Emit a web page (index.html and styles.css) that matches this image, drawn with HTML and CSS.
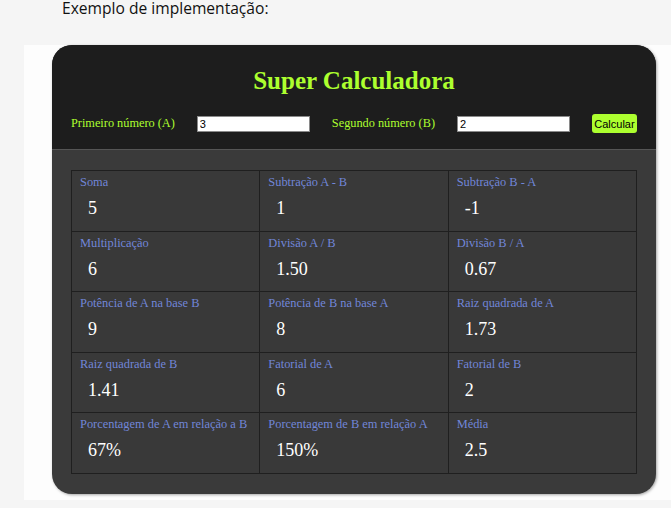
FILE: index.html
```html
<!DOCTYPE html>
<html lang="pt-BR">
<head>
<meta charset="utf-8">
<title>Super Calculadora</title>
<link rel="stylesheet" href="styles.css">
</head>
<body>
<p class="intro">Exemplo de implementação:</p>
<div class="panel">
  <div class="calc">
    <div class="calc-head">
      <h1 class="title">Super Calculadora</h1>
      <div class="controls">
        <label class="lbl" for="a">Primeiro número (A)</label>
        <input class="num" id="a" type="text" value="3">
        <label class="lbl" for="b">Segundo número (B)</label>
        <input class="num" id="b" type="text" value="2">
        <button class="btn">Calcular</button>
      </div>
    </div>
    <div class="calc-body">
      <div class="grid">
        <div class="cell"><div class="name">Soma</div><div class="val">5</div></div>
        <div class="cell"><div class="name">Subtração A - B</div><div class="val">1</div></div>
        <div class="cell"><div class="name">Subtração B - A</div><div class="val">-1</div></div>
        <div class="cell"><div class="name">Multiplicação</div><div class="val">6</div></div>
        <div class="cell"><div class="name">Divisão A / B</div><div class="val">1.50</div></div>
        <div class="cell"><div class="name">Divisão B / A</div><div class="val">0.67</div></div>
        <div class="cell"><div class="name">Potência de A na base B</div><div class="val">9</div></div>
        <div class="cell"><div class="name">Potência de B na base A</div><div class="val">8</div></div>
        <div class="cell"><div class="name">Raiz quadrada de A</div><div class="val">1.73</div></div>
        <div class="cell"><div class="name">Raiz quadrada de B</div><div class="val">1.41</div></div>
        <div class="cell"><div class="name">Fatorial de A</div><div class="val">6</div></div>
        <div class="cell"><div class="name">Fatorial de B</div><div class="val">2</div></div>
        <div class="cell"><div class="name">Porcentagem de A em relação a B</div><div class="val">67%</div></div>
        <div class="cell"><div class="name">Porcentagem de B em relação A</div><div class="val">150%</div></div>
        <div class="cell"><div class="name">Média</div><div class="val">2.5</div></div>
      </div>
    </div>
  </div>
</div>
</body>
</html>
```
FILE: styles.css
```css
html, body {
  margin: 0;
  padding: 0;
  background: #f5f5f5;
}
body {
  width: 671px;
  height: 508px;
  overflow: hidden;
}
.intro {
  margin: 0 0 0 62px;
  height: 45px;
  font-family: "Open Sans", "Noto Sans", sans-serif;
  font-size: 15.6px;
  line-height: 16px;
  color: #111;
}
.panel {
  margin-left: 24px;
  width: 614px;
  padding: 0 14px 6px 28px;
  background: #fdfdfd;
}
.calc {
  width: 604px;
  border-radius: 20px;
  overflow: hidden;
  background: #3a3a3a;
  box-shadow: 1px 1px 3px rgba(0, 0, 0, 0.35);
  font-family: "Liberation Serif", "Times New Roman", serif;
}
.calc-head {
  background: #1d1d1d;
  padding: 21px 19px 16px;
  border-bottom: 1px solid #555;
}
.title {
  margin: 0;
  text-align: center;
  font-size: 25px;
  line-height: 29px;
  font-weight: bold;
  color: #adff2f;
}
.controls {
  margin-top: 19px;
  display: flex;
  align-items: center;
  justify-content: space-between;
  height: 19px;
}
.lbl {
  font-size: 12.3px;
  color: #adff2f;
}
.num {
  box-sizing: border-box;
  width: 113px;
  height: 16px;
  margin: 0;
  padding: 0 2px;
  border: 1px solid #8a8a8a;
  background: #fff;
  font-family: "Liberation Sans", Arial, sans-serif;
  font-size: 11px;
  color: #000;
}
.btn {
  box-sizing: border-box;
  width: 45px;
  height: 19px;
  margin: 0;
  padding: 0;
  border: none;
  border-radius: 3px;
  background: #adff2f;
  font-family: "Liberation Sans", Arial, sans-serif;
  font-size: 11px;
  color: #000;
}
.calc-body {
  padding: 20px 19px 20px;
}
.grid {
  display: grid;
  grid-template-columns: 1fr 1fr 1fr;
  grid-auto-rows: 59.6px;
  gap: 1px;
  padding: 1px;
  background: #1f1f1f;
}
.cell {
  background: #393939;
  padding: 4px 8px 0;
}
.name {
  font-size: 12.4px;
  line-height: 14px;
  color: #7186d8;
  white-space: nowrap;
}
.val {
  margin: 9px 0 0 8px;
  font-size: 18px;
  line-height: 21px;
  color: #fff;
}
```
